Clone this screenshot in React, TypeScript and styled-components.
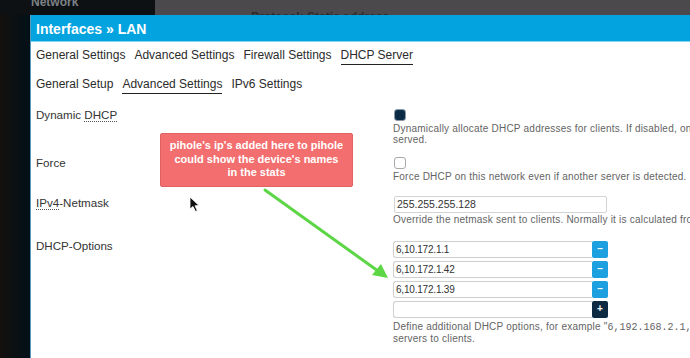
import { FC } from "react";
import styled, { createGlobalStyle } from "styled-components";

const GlobalStyle = createGlobalStyle`
  html, body {
    margin: 0;
    padding: 0;
    width: 690px;
    height: 358px;
    overflow: hidden;
    background: #0b1216;
    font-family: "Liberation Sans", Arial, sans-serif;
  }
`;

const Screen = styled.div({
  position: "relative",
  width: 690,
  height: 358,
  display: "grid",
  gridTemplateRows: "15px 1fr",
  overflow: "hidden",
});

const TopStrip = styled.div({
  display: "flex",
  overflow: "hidden",
});

const SideTop = styled.div({
  width: 155,
  flexShrink: 0,
  background: "#0d1114",
  paddingLeft: 31,
  boxSizing: "border-box",
  overflow: "hidden",
});

const SideTitle = styled.div({
  marginTop: -4,
  color: "#7d8287",
  fontSize: 12,
  fontWeight: 700,
  lineHeight: "12px",
});

const Backdrop = styled.div({
  flex: 1,
  background: "#4b494b",
  display: "flex",
  flexDirection: "column",
  paddingLeft: 11,
  paddingTop: 4,
  gap: 7,
  overflow: "hidden",
});

const BackdropLine = styled.div({
  height: 1,
  background: "#8e8c8e",
});

const BackdropText = styled.div({
  paddingLeft: 85,
  fontSize: 12,
  fontWeight: 700,
  color: "#2c2b2c",
  lineHeight: "12px",
});

const Main = styled.div({
  display: "flex",
  minHeight: 0,
});

const SideStrip = styled.div({
  width: 30,
  flexShrink: 0,
  background: "linear-gradient(90deg, #14100e, #021018)",
});

const Modal = styled.div({
  flex: 1,
  minWidth: 0,
  background: "#ffffff",
  borderLeft: "1px solid #5a9ab8",
  display: "flex",
  flexDirection: "column",
  overflow: "hidden",
});

const Header = styled.div({
  height: 26,
  background: "#03a3e0",
  borderBottom: "1px solid #86d3f2",
  color: "#ffffff",
  fontSize: 14,
  fontWeight: 700,
  lineHeight: "28px",
  paddingLeft: 5,
});

const Body = styled.div({
  padding: "0 0 0 5px",
  display: "flex",
  flexDirection: "column",
});

const TabRow = styled.div<{ $top: number }>(({ $top }) => ({
  display: "flex",
  gap: 9,
  marginTop: $top,
}));

const Tab = styled.div<{ $active?: boolean }>(({ $active }) => ({
  fontSize: 12,
  color: "#2b2b2b",
  lineHeight: "14px",
  paddingBottom: 2,
  borderBottom: $active ? "1.5px solid #222" : "1.5px solid transparent",
  whiteSpace: "nowrap",
}));

const FormRow = styled.div<{ $top: number }>(({ $top }) => ({
  display: "grid",
  gridTemplateColumns: "357px 1fr",
  marginTop: $top,
}));

const Label = styled.div<{ $pad?: number }>(({ $pad }) => ({
  fontSize: 11.6,
  color: "#333",
  lineHeight: "14px",
  paddingTop: $pad ?? 0,
}));

const Abbr = styled.span({
  borderBottom: "1px dotted #555",
});

const Field = styled.div<{ $pad: number }>(({ $pad }) => ({
  paddingTop: $pad,
  display: "flex",
  flexDirection: "column",
}));

const Checkbox = styled.div<{ $checked?: boolean }>(({ $checked }) => ({
  width: 10,
  height: 10,
  borderRadius: 3,
  border: $checked ? "1px solid #8a96a3" : "1px solid #a9a9a9",
  background: $checked ? "radial-gradient(circle, #0b2a45 55%, #123a5c 100%)" : "#fff",
  marginLeft: 1,
}));

const Desc = styled.div<{ $top?: number }>(({ $top }) => ({
  marginTop: $top ?? 2,
  fontSize: 10,
  lineHeight: "11px",
  letterSpacing: 0.22,
  color: "#646464",
  whiteSpace: "nowrap",
}));

const Mono = styled.span({
  fontFamily: '"Liberation Mono", "Courier New", monospace',
  letterSpacing: 0,
});

const TextInput = styled.div({
  width: 213,
  height: 17,
  boxSizing: "border-box",
  border: "1px solid #d4d4d4",
  borderRadius: 2,
  fontSize: 10.5,
  color: "#333",
  lineHeight: "15px",
  paddingLeft: 2,
  marginLeft: 1,
});

const OptionList = styled.div({
  display: "flex",
  flexDirection: "column",
  gap: 3,
});

const OptionRow = styled.div({
  display: "flex",
  height: 17,
});

const OptionInput = styled.div({
  width: 199,
  height: 17,
  boxSizing: "border-box",
  border: "1px solid #cfcfcf",
  borderRight: "none",
  borderRadius: "3px 0 0 3px",
  fontSize: 10,
  letterSpacing: -0.2,
  color: "#333",
  lineHeight: "15px",
  paddingLeft: 2,
});

const OptionButton = styled.div<{ $add?: boolean }>(({ $add }) => ({
  width: 16,
  height: 17,
  background: $add ? "#0e2a43" : "#1ca0e0",
  borderRadius: 2,
  color: "#fff",
  fontSize: 10,
  fontWeight: 700,
  lineHeight: "16px",
  textAlign: "center",
}));

const Callout = styled.div({
  position: "absolute",
  left: 160,
  top: 133,
  width: 193,
  height: 54,
  boxSizing: "border-box",
  background: "#f36f6f",
  border: "1px solid #e06262",
  borderRadius: 2,
  color: "#fff",
  fontSize: 11,
  fontWeight: 700,
  lineHeight: "13.5px",
  textAlign: "center",
  padding: "5px 8px 0",
});

const Overlay = styled.svg({
  position: "absolute",
  left: 0,
  top: 0,
  pointerEvents: "none",
});

const options = ["6,10.172.1.1", "6,10.172.1.42", "6,10.172.1.39"];

const App: FC = () => {
  return (
    <>
      <GlobalStyle />
      <Screen>
        <TopStrip>
          <SideTop>
            <SideTitle>Network</SideTitle>
          </SideTop>
          <Backdrop>
            <BackdropLine />
            <BackdropText>Protocol: Static address</BackdropText>
          </Backdrop>
        </TopStrip>
        <Main>
          <SideStrip />
          <Modal>
            <Header>Interfaces » LAN</Header>
            <Body>
              <TabRow $top={6}>
                <Tab>General Settings</Tab>
                <Tab>Advanced Settings</Tab>
                <Tab>Firewall Settings</Tab>
                <Tab $active>DHCP Server</Tab>
              </TabRow>
              <TabRow $top={12}>
                <Tab>General Setup</Tab>
                <Tab $active>Advanced Settings</Tab>
                <Tab>IPv6 Settings</Tab>
              </TabRow>

              <FormRow $top={13}>
                <Label $pad={1}>
                  Dynamic <Abbr>DHCP</Abbr>
                </Label>
                <Field $pad={2}>
                  <Checkbox $checked />
                  <Desc>
                    Dynamically allocate DHCP addresses for clients. If disabled, only clients having static leases will be
                    <br />
                    served.
                  </Desc>
                </Field>
              </FormRow>

              <FormRow $top={10}>
                <Label $pad={1}>Force</Label>
                <Field $pad={2}>
                  <Checkbox />
                  <Desc $top={2}>Force DHCP on this network even if another server is detected.</Desc>
                </Field>
              </FormRow>

              <FormRow $top={13}>
                <Label $pad={1}>
                  <Abbr>IPv4</Abbr>-Netmask
                </Label>
                <Field $pad={1}>
                  <TextInput>255.255.255.128</TextInput>
                  <Desc $top={1}>Override the netmask sent to clients. Normally it is calculated from the subnet that is served.</Desc>
                </Field>
              </FormRow>

              <FormRow $top={14}>
                <Label $pad={0}>DHCP-Options</Label>
                <Field $pad={2}>
                  <OptionList>
                    {options.map((o) => (
                      <OptionRow key={o}>
                        <OptionInput>{o}</OptionInput>
                        <OptionButton>–</OptionButton>
                      </OptionRow>
                    ))}
                    <OptionRow>
                      <OptionInput />
                      <OptionButton $add>+</OptionButton>
                    </OptionRow>
                  </OptionList>
                  <Desc $top={3}>
                    Define additional DHCP options, for example "<Mono>6,192.168.2.1,192.168.2.2</Mono>" which advertises different DNS
                    <br />
                    servers to clients.
                  </Desc>
                </Field>
              </FormRow>
            </Body>
          </Modal>
        </Main>

        <Callout>
          pihole's ip's added here to pihole could show the device's names in the stats
        </Callout>

        <Overlay width={690} height={358} viewBox="0 0 690 358">
          <line x1={265} y1={190} x2={378} y2={271} stroke="#5dd646" strokeWidth={3} strokeLinecap="round" />
          <polygon points="388,278 372,275 381,264" fill="#5dd646" />
          <path
            d="M190 197 L190 209 L193 206.5 L195.5 211.5 L197.3 210.6 L195 205.8 L199 205.6 Z"
            fill="#111"
            stroke="#fff"
            strokeWidth={0.8}
          />
        </Overlay>
      </Screen>
    </>
  );
};

export default App;
